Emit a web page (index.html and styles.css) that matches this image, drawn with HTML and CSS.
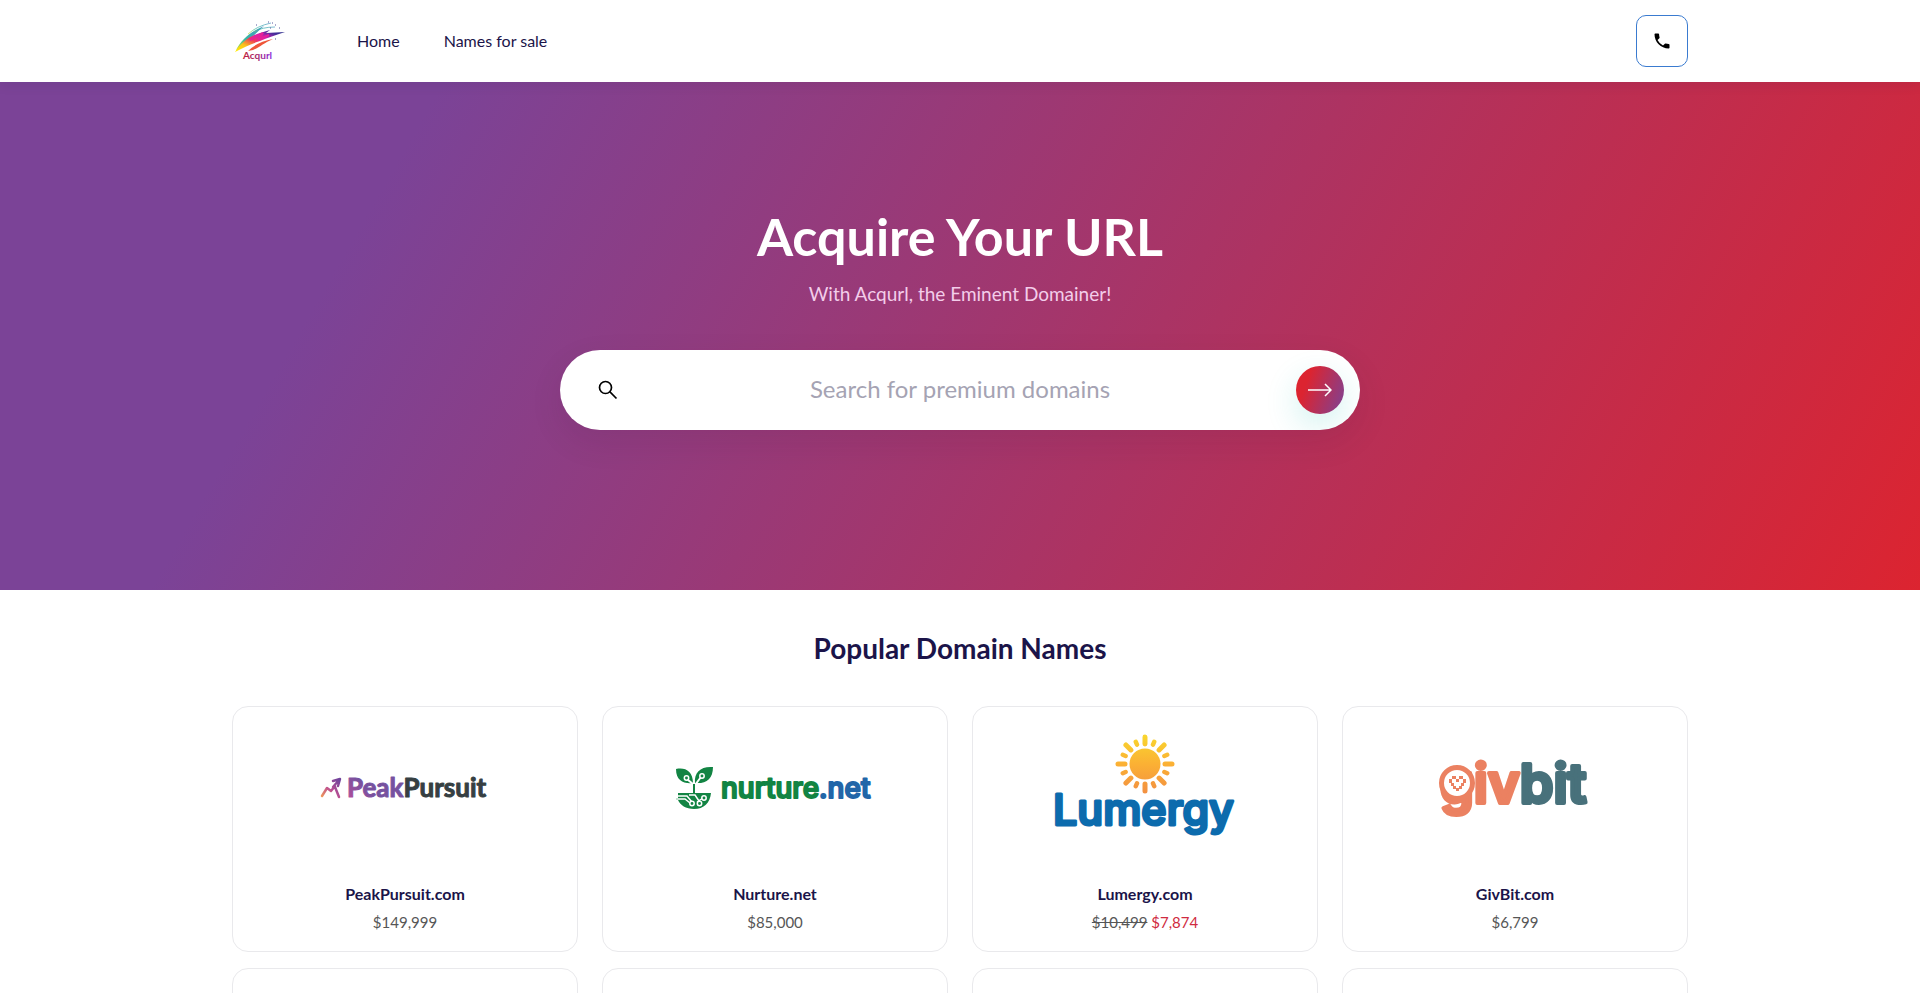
FILE: index.html
```html
<!DOCTYPE html>
<html lang="en">
<head>
<meta charset="utf-8">
<meta name="viewport" content="width=device-width, initial-scale=1">
<title>Acqurl</title>
<link rel="stylesheet" href="styles.css">
</head>
<body>
<header class="site-header">
  <div class="container header-row">
    <a class="brand" href="#" aria-label="Acqurl">
      <svg width="56" height="50" viewBox="0 0 56 50">
        <defs>
          <linearGradient id="feather" x1="0" y1="1" x2="1" y2="0">
            <stop offset="0" stop-color="#fff200"/><stop offset=".25" stop-color="#fbc21a"/><stop offset=".45" stop-color="#ee3a5a"/><stop offset=".62" stop-color="#d81fb4"/><stop offset=".8" stop-color="#4b2f9c"/><stop offset="1" stop-color="#1f2f86"/>
          </linearGradient>
          <linearGradient id="edge" x1="0" y1="1" x2="1" y2="0">
            <stop offset="0" stop-color="#c7e534"/><stop offset=".4" stop-color="#35b8a6"/><stop offset="1" stop-color="#4c8fc4"/>
          </linearGradient>
          <linearGradient id="word"><stop offset="0" stop-color="#c2203c"/><stop offset=".5" stop-color="#a8286c"/><stop offset="1" stop-color="#8a2be2"/></linearGradient>
        </defs>
        <path d="M4 34C9 25 17 16 32 10C26 15 20 21 14 28Z" fill="url(#edge)"/>
        <path d="M16 18Q25 10 39 7M22 16Q30 11 43 11" fill="none" stroke="url(#edge)" stroke-width=".7"/>
        <path d="M3 36C9 27 17 20 28 17L38 14L34 17L53 16C44 19 35 22 28 25C19 28 12 31 3 36Z" fill="url(#feather)"/>
        <path d="M16 35C22 29 30 25 41 23C32 27 28 31 21 34Z" fill="#ee5538"/>
        <path d="M18 24L31 17L27 23L37 19" fill="none" stroke="#e62199" stroke-width="2"/>
        <path d="M40 7h1M43 9h1M38 12h1M43 23h1M24 9h1M36 6h1M47 12h1" stroke="#55559b" stroke-width="1"/>
        <text class="brand-word" x="11" y="43" fill="url(#word)">Acqurl</text>
      </svg>
    </a>
    <nav class="nav">
      <a href="#">Home</a>
      <a href="#">Names for sale</a>
    </nav>
    <a class="phone" href="#" aria-label="Call us">
      <svg width="20" height="20" viewBox="0 0 24 24"><path d="M20 15.5c-1.250 0-2.450-.2-3.570-.57a1.020 1.020 0 0 0-1.020.24l-2.200 2.200a15.100 15.100 0 0 1-6.590-6.590l2.200-2.200c.27-.27.35-.67.24-1.020A11.400 11.400 0 0 1 8.500 4c0-.55-.45-1-1-1H4c-.55 0-1 .45-1 1 0 9.390 7.610 17 17 17 .55 0 1-.45 1-1v-3.500c0-.55-.45-1-1-1z"/></svg>
    </a>
  </div>
</header>

<main>
  <section class="hero">
    <h1>Acquire Your URL</h1>
    <p>With Acqurl, the Eminent Domainer!</p>
    <form class="search">
      <svg class="search-icon" width="24" height="24" viewBox="0 0 24 24" fill="none" stroke="#000" stroke-width="1.700"><circle cx="9.500" cy="9.500" r="6"/><path d="M13.700 13.700L20.500 20.500"/></svg>
      <input type="text" aria-label="Search for premium domains" placeholder="Search for premium domains">
      <button type="submit" aria-label="Search">
        <svg width="24" height="14" viewBox="0 0 24 14" fill="none" stroke="#fff" stroke-width="1.500"><path d="M0 7H23M17 1L23 7L17 13"/></svg>
      </button>
    </form>
  </section>

  <section class="container popular">
    <h2>Popular Domain Names</h2>
    <div class="grid">
      <a class="card" href="#">
        <svg class="logo" viewBox="0 0 280 160" aria-hidden="true">
          <defs>
            <linearGradient id="peak" gradientUnits="userSpaceOnUse" x1="56" y1="90" x2="74" y2="72"><stop offset="0" stop-color="#f5a052"/><stop offset=".5" stop-color="#bd4f92"/><stop offset="1" stop-color="#71439b"/></linearGradient>
            <linearGradient id="peakword" gradientUnits="userSpaceOnUse" x1="83" y1="92" x2="98" y2="76"><stop offset="0" stop-color="#b54c9b"/><stop offset="1" stop-color="#76519f"/></linearGradient>
          </defs>
          <path d="M57 88L62 80L66 83L70 78M70 79L74 89M68 73L75 71L73 78M74 72L68 79" fill="none" stroke="url(#peak)" stroke-width="2.500" stroke-linecap="round" stroke-linejoin="round"/>
          <text class="peak-word" x="82" y="89"><tspan fill="url(#peakword)" stroke="url(#peakword)">Peak</tspan><tspan fill="#363f42" stroke="#363f42">Pursuit</tspan></text>
        </svg>
        <h3>PeakPursuit.com</h3>
        <p class="price">$149,999</p>
      </a>
      <a class="card" href="#">
        <svg class="logo" viewBox="0 0 280 160" aria-hidden="true">
          <path d="M41 61C50 59 58 63 58 75C49 76 41 73 41 61ZM78 59C66 58 59 64 60 75C71 76 78 71 78 59ZM43 85H76C75 95 69 101 59 101C51 101 45 97 43 92H41V90H43Z" fill="#128443"/>
          <path d="M59 86V77L52 71M60 77L66 69" fill="none" stroke="#fff" stroke-width="2"/>
          <path d="M59 86V76" stroke="#128443" stroke-width="2"/>
          <path d="M41 88H52L57 94M41 91H50L55 95M54 87L60 87L64 93M62 94L68 90" fill="none" stroke="#fff" stroke-width="1.500"/>
          <g fill="#128443" stroke="#fff" stroke-width="1.500"><circle cx="51.500" cy="70" r="2.200"/><circle cx="67" cy="68" r="2.200"/><circle cx="57" cy="95.500" r="2.200"/><circle cx="64.500" cy="95.500" r="2.200"/><circle cx="69" cy="90" r="2.200"/></g>
          <text class="nurture-word" x="86" y="90"><tspan fill="#128443" stroke="#128443">nurture</tspan><tspan fill="#2266a8" stroke="#2266a8">.net</tspan></text>
        </svg>
        <h3>Nurture.net</h3>
        <p class="price">$85,000</p>
      </a>
      <a class="card" href="#">
        <svg class="logo" viewBox="0 0 280 160" aria-hidden="true">
          <defs><linearGradient id="sun" gradientUnits="userSpaceOnUse" x1="0" y1="27" x2="0" y2="86"><stop offset="0" stop-color="#f9d62e"/><stop offset=".5" stop-color="#fbb034"/><stop offset="1" stop-color="#f28f42"/></linearGradient></defs>
          <circle cx="140" cy="56" r="15.500" fill="url(#sun)"/>
          <path d="M139.990 36L140.010 29M154.100 41.900L159.100 36.900M160 56H167M154.100 70.100L159.100 75.100M140 76V83M125.900 70.100L120.900 75.100M120 56H113M125.900 41.900L120.900 36.900" stroke="url(#sun)" stroke-width="5" stroke-linecap="round" fill="none"/>
          <path d="M148 36.600L149.200 33.800M159.400 48L162.200 46.800M159.400 64L162.200 65.200M148 75.400L149.200 78.200M132 75.400L130.800 78.200M120.600 64L117.800 65.200M120.600 48L117.800 46.800M132 36.600L130.800 33.800" stroke="url(#sun)" stroke-width="4.500" stroke-linecap="round" fill="none"/>
          <text class="lumergy-word" x="48" y="117">Lumergy</text>
        </svg>
        <h3>Lumergy.com</h3>
        <p class="price"><s>$10,499</s> <span class="sale">$7,874</span></p>
      </a>
      <a class="card" href="#">
        <svg class="logo" viewBox="0 0 280 160" aria-hidden="true">
          <text class="givbit-word" x="65" y="95"><tspan fill="#eb8161" stroke="#eb8161">giv</tspan><tspan fill="#48717b" stroke="#48717b">bit</tspan></text>
          <circle cx="82" cy="75" r="15.500" fill="#fff" stroke="#eb8161" stroke-width="5"/>
          <path d="M77 68h4v3h-4zM84 68h4v3h-4zM74 71h3v4h-3zM81 71h3v3h-3zM88 71h3v4h-3zM76 75h3v3h-3zM86 75h3v3h-3zM78 78h3v3h-3zM84 78h3v3h-3zM81 80h3v3h-3z" fill="#eb8161"/>
        </svg>
        <h3>GivBit.com</h3>
        <p class="price">$6,799</p>
      </a>
      <a class="card" href="#" aria-label="More names"></a>
      <a class="card" href="#" aria-label="More names"></a>
      <a class="card" href="#" aria-label="More names"></a>
      <a class="card" href="#" aria-label="More names"></a>
    </div>
  </section>
</main>
</body>
</html>
```
FILE: styles.css
```css
* { box-sizing: border-box; }

body {
  margin: 0;
  background: #fff;
  color: #1b1449;
  font-family: Lato, "Open Sans", sans-serif;
  font-size: 16px;
  line-height: 24px;
}

a { color: inherit; text-decoration: none; }
h1, h2, h3, p { margin: 0; }

.container {
  width: 100%;
  max-width: 1504px;
  margin: 0 auto;
  padding: 0 24px;
}

.site-header { position: relative; background: #fff; box-shadow: 0 2px 12px rgba(30, 20, 70, .1); }
.header-row { display: flex; align-items: center; padding-top: 15px; padding-bottom: 15px; }
.brand { display: flex; margin-right: 69px; }
.brand-word { font: 700 10px Lato, sans-serif; }
.nav { display: flex; gap: 44px; }
.phone {
  display: flex;
  align-items: center;
  justify-content: center;
  width: 52px;
  height: 52px;
  margin-left: auto;
  border: 1px solid #3a7bd0;
  border-radius: 10px;
}

.hero {
  display: flex;
  flex-direction: column;
  align-items: center;
  padding: 120px 24px 160px;
  background: linear-gradient(120deg, #7b4397 20%, #dc2430);
  text-align: center;
}
.hero h1 { color: #fff; font-size: 52px; line-height: 68px; font-weight: 700; }
.hero p { margin-top: 10px; color: #f3cdea; font-size: 19px; line-height: 28px; }

.search {
  display: flex;
  align-items: center;
  width: 100%;
  max-width: 800px;
  height: 80px;
  margin-top: 42px;
  padding: 0 16px 0 36px;
  border-radius: 40px;
  background: #fff;
  box-shadow: 0 12px 32px rgba(60, 20, 60, .1);
  overflow: hidden;
}
.search-icon { flex: none; }
.search input {
  flex: 1;
  min-width: 0;
  padding: 0 0 2px 4px;
  border: 0;
  outline: 0;
  background: transparent;
  color: #1b1449;
  font: 400 24px/32px Lato, "Open Sans", sans-serif;
  text-align: center;
}
.search input::placeholder { color: #a5a3b3; opacity: 1; }
.search button {
  display: flex;
  align-items: center;
  justify-content: center;
  width: 48px;
  height: 48px;
  padding: 0;
  border: 0;
  border-radius: 50%;
  background: linear-gradient(110deg, #dc2430 25%, #7b4397);
  box-shadow: 0 12px 32px rgba(30, 190, 180, .2);
}

.popular { padding-top: 40px; padding-bottom: 40px; }
.popular h2 { font-size: 28px; line-height: 36px; font-weight: 700; text-align: center; }
.grid {
  display: grid;
  grid-template-columns: repeat(4, 1fr);
  gap: 16px 24px;
  margin-top: 40px;
}
.card {
  display: flex;
  flex-direction: column;
  align-items: center;
  min-height: 246px;
  padding: 1px 16px 16px;
  border: 1px solid #e9e9ec;
  border-radius: 16px;
}
.logo { display: block; width: 280px; height: 160px; max-width: 100%; }
.card h3 { margin-top: 14px; font-size: 16px; line-height: 24px; font-weight: 700; }
.price { margin-top: 4px; color: #565656; font-size: 15px; }
.sale { color: #d02a40; }

.peak-word { font: 700 26px Lato, sans-serif; stroke-width: 1px; stroke-linejoin: round; }
.nurture-word { font: 500 28px Inter, sans-serif; stroke-width: 2px; stroke-linejoin: round; }
.lumergy-word { font: 500 43px Inter, sans-serif; fill: #0c6bad; stroke: #0c6bad; stroke-width: 3px; stroke-linejoin: round; }
.givbit-word { font: 600 54px Inter, sans-serif; stroke-width: 4px; stroke-linejoin: round; }
```
